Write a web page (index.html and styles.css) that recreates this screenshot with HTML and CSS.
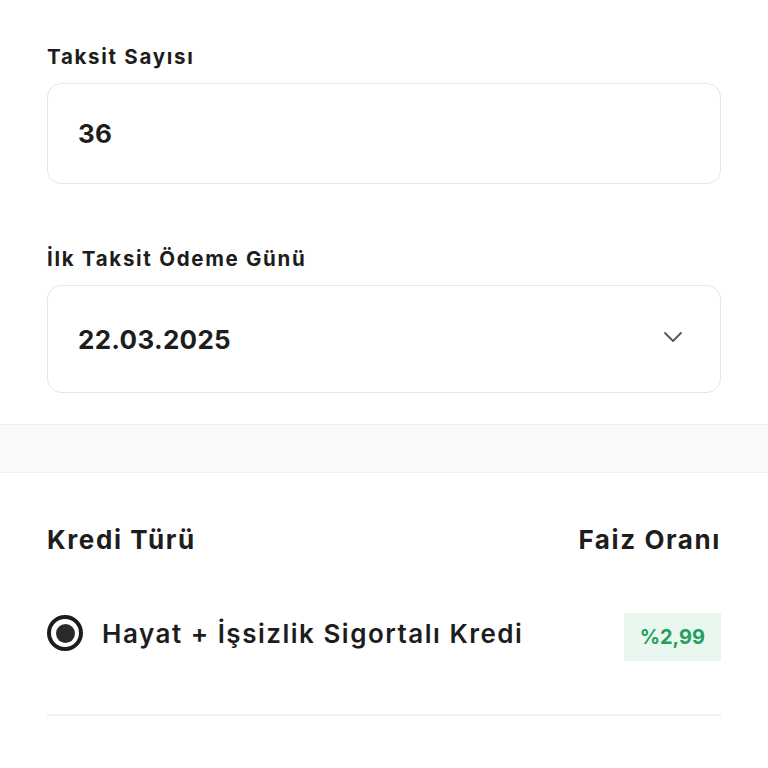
FILE: index.html
```html
<html>
<head>
    <title>Kredi Hesaplama</title>
    <link rel="stylesheet" href="styles.css">
</head>
<body>
    <div class="form">
        <div class="field">
            <div class="label">Taksit Sayısı</div>
            <div class="box">36</div>
        </div>
        <div class="field">
            <div class="label">İlk Taksit Ödeme Günü</div>
            <div class="box select">
                <span>22.03.2025</span>
                <svg class="chevron" width="20" height="12" viewBox="0 0 20 12">
                    <path d="M2 2 L10 10 L18 2" fill="none" stroke="#555" stroke-width="1.8" stroke-linecap="round" stroke-linejoin="round"/>
                </svg>
            </div>
        </div>
    </div>
    <div class="band"></div>
    <div class="credit">
        <div class="credit-head">
            <span>Kredi Türü</span>
            <span>Faiz Oranı</span>
        </div>
        <div class="credit-row">
            <div class="option">
                <span class="radio"><span class="dot"></span></span>
                <span class="option-text">Hayat + İşsizlik Sigortalı Kredi</span>
            </div>
            <span class="rate">%2,99</span>
        </div>
    </div>
</body>
</html>
```

FILE: styles.css
```css
body {
    margin: 0;
    background-color: #fff;
    font-family: Inter, "Noto Sans", sans-serif;
    color: #1d1d1d;
}
.form {
    padding: 44px 47px 31px 47px;
    display: flex;
    flex-direction: column;
    gap: 62px;
}
.label {
    font-size: 20.5px;
    font-weight: 700;
    letter-spacing: 1.7px;
    margin-bottom: 14px;
}
.box {
    box-sizing: border-box;
    height: 101px;
    border: 1.5px solid #e6e6e6;
    border-radius: 14px;
    padding: 0 30px;
    display: flex;
    align-items: center;
    font-size: 26px;
    font-weight: 700;
    letter-spacing: 0.3px;
}
.select {
    height: 108px;
    justify-content: space-between;
}
.chevron {
    margin-right: 7px;
    margin-top: -4px;
}
.band {
    height: 47px;
    background-color: #fafafa;
    border-top: 1px solid #efefef;
    border-bottom: 1px solid #efefef;
}
.credit {
    margin: 0 47px;
    padding-top: 51px;
}
.credit-head {
    display: flex;
    justify-content: space-between;
    font-size: 26px;
    font-weight: 700;
    letter-spacing: 1.6px;
}
.credit-row {
    display: flex;
    justify-content: space-between;
    align-items: center;
    padding: 54px 0 57px 0;
    border-bottom: 2px solid #efefef;
}
.option {
    display: flex;
    align-items: center;
    gap: 19px;
}
.radio {
    width: 28px;
    height: 28px;
    border: 4px solid #1d1d1d;
    border-radius: 50%;
    display: flex;
    align-items: center;
    justify-content: center;
}
.dot {
    width: 19px;
    height: 19px;
    border-radius: 50%;
    background-color: #2a2a2a;
}
.option-text {
    font-size: 26px;
    font-weight: 600;
    letter-spacing: 1.5px;
}
.rate {
    background-color: #e9f7ef;
    color: #24a05e;
    font-size: 20px;
    font-weight: 700;
    padding: 12px 16px;
    margin: 4px 0 -4px 0;
}
```
